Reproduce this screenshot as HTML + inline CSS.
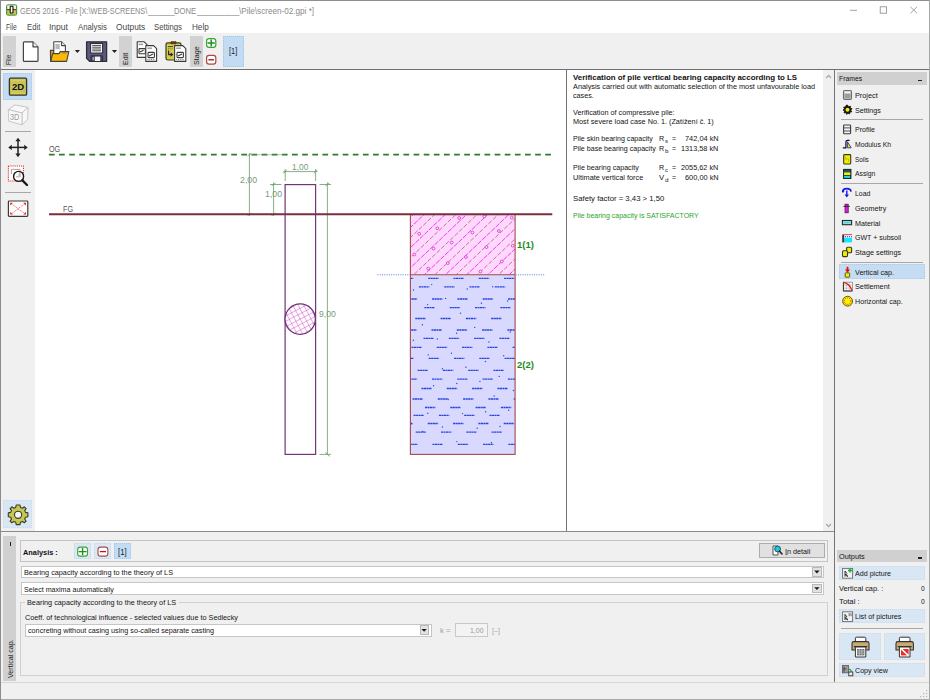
<!DOCTYPE html>
<html lang="en">
<head>
<meta charset="utf-8">
<title>GEO5 2016 - Pile</title>
<style>
html,body{margin:0;padding:0;}
body{width:930px;height:700px;overflow:hidden;background:#f0f0f0;position:relative;font-family:"Liberation Sans",sans-serif;}
.a{position:absolute;}
.t{position:absolute;white-space:pre;transform-origin:0 0;font-family:"Liberation Sans",sans-serif;}
.b{position:absolute;box-sizing:border-box;}
svg{position:absolute;left:0;top:0;overflow:visible;}
</style>
</head>
<body>
<!-- title + menu -->
<div class="a" style="left:0;top:0;width:930px;height:33.3px;background:#fff;"></div>
<div class="a" style="left:0;top:0;width:930px;height:1px;background:#8e8e8e;"></div>
<!-- toolbar -->
<div class="a" style="left:0;top:33.3px;width:930px;height:35.7px;background:#f0f0f0;"></div>
<div class="a" style="left:0;top:68.6px;width:930px;height:1.4px;background:#707070;"></div>
<!-- toolbar labels -->
<div class="a" style="left:3px;top:36px;width:12.5px;height:30.6px;background:#d2d2d2;"></div>
<div class="a" style="left:119.4px;top:36px;width:12.5px;height:30.6px;background:#d2d2d2;"></div>
<div class="a" style="left:190px;top:36px;width:12.8px;height:30.6px;background:#d2d2d2;"></div>
<div class="b" style="left:223px;top:36px;width:21px;height:30.6px;background:#c3dbf3;border:1px dotted #9cc4ec;"></div>

<!-- left toolbar -->
<div class="a" style="left:0;top:70px;width:35px;height:461px;background:#f0f0f0;"></div>
<!-- canvas -->
<div class="a" style="left:35px;top:70px;width:531px;height:461px;background:#fff;"></div>
<!-- splitter -->
<div class="a" style="left:565.8px;top:70px;width:1px;height:461px;background:#747474;"></div>
<!-- text panel -->
<div class="a" style="left:567px;top:70px;width:256px;height:461px;background:#fff;"></div>
<div class="a" style="left:823px;top:70px;width:11px;height:461px;background:#f0f0f0;"></div>
<div class="a" style="left:834px;top:70px;width:1px;height:612px;background:#747474;"></div>
<!-- right panel -->
<div class="a" style="left:835.2px;top:70px;width:95px;height:612px;background:#f0f0f0;"></div>
<div class="a" style="left:837.1px;top:72px;width:90.4px;height:12.8px;background:#d0d0d0;"></div>
<div class="a" style="left:918px;top:79.6px;width:4.2px;height:1.4px;background:#222;"></div>
<div class="a" style="left:841px;top:119.2px;width:82px;height:1px;background:#a8a8a8;"></div>
<div class="a" style="left:841px;top:182.7px;width:82px;height:1px;background:#a8a8a8;"></div>
<div class="a" style="left:841px;top:261.5px;width:82px;height:1px;background:#a8a8a8;"></div>
<div class="b" style="left:839.2px;top:264px;width:85.6px;height:14.7px;background:#c5dcf3;border:1px dotted #a9cbee;"></div>

<!-- horizontal divider -->
<div class="a" style="left:0;top:531px;width:834px;height:1.4px;background:#8a8a8a;"></div>
<!-- bottom panel -->
<div class="a" style="left:0;top:532.4px;width:834px;height:149px;background:#f0f0f0;"></div>
<div class="a" style="left:2.8px;top:536px;width:13px;height:144.5px;background:#d0d0d0;"></div>
<div class="a" style="left:10.3px;top:542px;width:1.2px;height:4px;background:#222;"></div>
<!-- analysis frame -->
<div class="b" style="left:20px;top:539.8px;width:807.5px;height:22px;border:1px solid #c4c4c4;"></div>
<div class="b" style="left:73.6px;top:543.4px;width:17.2px;height:15.6px;background:#dae7f4;border:1px dotted #bfd8f0;"></div>
<div class="b" style="left:94px;top:543.4px;width:17.2px;height:15.6px;background:#dae7f4;border:1px dotted #bfd8f0;"></div>
<div class="b" style="left:114px;top:543.4px;width:17.4px;height:15.6px;background:#c3dcf5;border:1px dotted #9ccaf5;"></div>
<div class="b" style="left:758.6px;top:543.3px;width:66.2px;height:14.8px;background:#e1e1e1;border:1px solid #adadad;"></div>
<!-- combos -->
<div class="b" style="left:21px;top:565.8px;width:803px;height:12.7px;background:#fff;border:1px solid #c6c6c6;"></div>
<div class="b" style="left:21px;top:582.2px;width:803px;height:13.2px;background:#fff;border:1px solid #c6c6c6;"></div>
<div class="b" style="left:812.3px;top:567.3px;width:9.4px;height:9.4px;background:#e2e2e2;border:1px solid #b8b8b8;"></div>
<div class="b" style="left:812.3px;top:584px;width:9.4px;height:9.4px;background:#e2e2e2;border:1px solid #b8b8b8;"></div>
<!-- group box -->
<div class="b" style="left:20.3px;top:602.4px;width:807.5px;height:73.6px;border:1px solid #d0d0d0;"></div>
<div class="a" style="left:24.5px;top:598px;width:154px;height:9px;background:#f0f0f0;"></div>
<div class="b" style="left:25.2px;top:623.6px;width:406.6px;height:13.2px;background:#fff;border:1px solid #c6c6c6;"></div>
<div class="b" style="left:419.6px;top:625.4px;width:9.4px;height:9.4px;background:#e2e2e2;border:1px solid #b8b8b8;"></div>
<div class="b" style="left:454.8px;top:623px;width:33.2px;height:14.4px;background:#f3f3f3;border:1px solid #c9c9c9;"></div>
<!-- outputs -->
<div class="a" style="left:837.1px;top:549.7px;width:90.4px;height:12.8px;background:#d0d0d0;"></div>
<div class="a" style="left:918px;top:557.4px;width:4.2px;height:1.4px;background:#222;"></div>
<div class="b" style="left:839.1px;top:565.8px;width:85.9px;height:13.8px;background:#d9e6f3;border:1px dotted #cbdcee;"></div>
<div class="b" style="left:839.1px;top:609.4px;width:85.9px;height:13.8px;background:#d9e6f3;border:1px dotted #cbdcee;"></div>
<div class="a" style="left:841px;top:628px;width:82px;height:1px;background:#a8a8a8;"></div>
<div class="b" style="left:839.1px;top:633px;width:41.5px;height:27.4px;background:#d9e6f3;border:1px dotted #cbdcee;"></div>
<div class="b" style="left:884.4px;top:633px;width:40.8px;height:27.4px;background:#d9e6f3;border:1px dotted #cbdcee;"></div>
<div class="b" style="left:839.1px;top:663px;width:85.9px;height:13.6px;background:#d9e6f3;border:1px dotted #cbdcee;"></div>
<!-- status bar -->
<div class="a" style="left:0;top:681.6px;width:930px;height:1.2px;background:#d6d6d6;"></div>
<div class="a" style="left:0;top:682.6px;width:930px;height:17px;background:#f0f0f0;"></div>
<div class="a" style="left:0;top:698.8px;width:930px;height:1.2px;background:#a8a8a8;"></div>
<div class="a" style="left:0;top:0;width:1px;height:700px;background:#8c8c8c;"></div>
<div class="a" style="left:929px;top:0;width:1px;height:700px;background:#a4a8a8;"></div>

<!-- left toolbar buttons -->
<div class="b" style="left:3px;top:72.6px;width:29.2px;height:27.2px;background:#c3dbf3;border:1px dotted #a4c9ee;"></div>
<div class="a" style="left:4.6px;top:131.3px;width:26px;height:1px;background:#a8a8a8;"></div>
<div class="a" style="left:4.6px;top:192px;width:26px;height:1px;background:#a8a8a8;"></div>
<div class="b" style="left:3px;top:500.4px;width:28.6px;height:27.4px;background:#d9e6f3;border:1px dotted #cbdcee;"></div>

<svg width="930" height="700" viewBox="0 0 930 700">
<defs>
<clipPath id="cs1"><rect x="410.4" y="214.5" width="104.6" height="60.3"/></clipPath>
<clipPath id="cs2"><rect x="410.4" y="274.8" width="104.6" height="179.5"/></clipPath>
<clipPath id="cc"><circle cx="300.2" cy="319.1" r="15.2"/></clipPath>
</defs>
<rect x="410.4" y="214.5" width="104.6" height="60.3" fill="#ffd9fd"/>
<g clip-path="url(#cs1)" stroke-width="0.85" fill="none">
<line x1="402.9" y1="214.5" x2="338.7" y2="275.5" stroke="#ee1cee" stroke-dasharray="5 1.2" stroke-dashoffset="0.0"/>
<line x1="413.5" y1="214.5" x2="349.3" y2="275.5" stroke="#c05a96" stroke-dasharray="4.4 1.8" stroke-dashoffset="2.3"/>
<line x1="424.1" y1="214.5" x2="359.9" y2="275.5" stroke="#ee1cee" stroke-dasharray="5 1.2" stroke-dashoffset="3.4"/>
<line x1="434.7" y1="214.5" x2="370.5" y2="275.5" stroke="#c05a96" stroke-dasharray="4.4 1.8" stroke-dashoffset="1.1"/>
<line x1="445.3" y1="214.5" x2="381.1" y2="275.5" stroke="#ee1cee" stroke-dasharray="5 1.2" stroke-dashoffset="1.0"/>
<line x1="455.9" y1="214.5" x2="391.7" y2="275.5" stroke="#c05a96" stroke-dasharray="4.4 1.8" stroke-dashoffset="5.7"/>
<line x1="466.5" y1="214.5" x2="402.3" y2="275.5" stroke="#ee1cee" stroke-dasharray="5 1.2" stroke-dashoffset="4.4"/>
<line x1="477.1" y1="214.5" x2="412.9" y2="275.5" stroke="#c05a96" stroke-dasharray="4.4 1.8" stroke-dashoffset="4.5"/>
<line x1="487.7" y1="214.5" x2="423.5" y2="275.5" stroke="#ee1cee" stroke-dasharray="5 1.2" stroke-dashoffset="2.0"/>
<line x1="498.3" y1="214.5" x2="434.1" y2="275.5" stroke="#c05a96" stroke-dasharray="4.4 1.8" stroke-dashoffset="3.3"/>
<line x1="508.9" y1="214.5" x2="444.7" y2="275.5" stroke="#ee1cee" stroke-dasharray="5 1.2" stroke-dashoffset="5.4"/>
<line x1="519.5" y1="214.5" x2="455.3" y2="275.5" stroke="#c05a96" stroke-dasharray="4.4 1.8" stroke-dashoffset="2.1"/>
<line x1="530.1" y1="214.5" x2="465.9" y2="275.5" stroke="#ee1cee" stroke-dasharray="5 1.2" stroke-dashoffset="3.0"/>
<line x1="540.7" y1="214.5" x2="476.5" y2="275.5" stroke="#c05a96" stroke-dasharray="4.4 1.8" stroke-dashoffset="0.9"/>
<line x1="551.3" y1="214.5" x2="487.1" y2="275.5" stroke="#ee1cee" stroke-dasharray="5 1.2" stroke-dashoffset="0.6"/>
<line x1="561.9" y1="214.5" x2="497.7" y2="275.5" stroke="#c05a96" stroke-dasharray="4.4 1.8" stroke-dashoffset="5.5"/>
<line x1="572.5" y1="214.5" x2="508.3" y2="275.5" stroke="#ee1cee" stroke-dasharray="5 1.2" stroke-dashoffset="4.0"/>
<line x1="583.1" y1="214.5" x2="518.9" y2="275.5" stroke="#c05a96" stroke-dasharray="4.4 1.8" stroke-dashoffset="4.3"/>
<circle cx="459.2" cy="218" r="1.4" stroke="#d428d4" stroke-width="0.8" fill="#ffe6fe"/>
<circle cx="484.4" cy="216.4" r="1.4" stroke="#d428d4" stroke-width="0.8" fill="#ffe6fe"/>
<circle cx="511.7" cy="217.7" r="1.4" stroke="#d428d4" stroke-width="0.8" fill="#ffe6fe"/>
<circle cx="437.3" cy="228.3" r="1.4" stroke="#d428d4" stroke-width="0.8" fill="#ffe6fe"/>
<circle cx="419.2" cy="233.8" r="1.4" stroke="#d428d4" stroke-width="0.8" fill="#ffe6fe"/>
<circle cx="472.4" cy="232.5" r="1.4" stroke="#d428d4" stroke-width="0.8" fill="#ffe6fe"/>
<circle cx="498.9" cy="231" r="1.4" stroke="#d428d4" stroke-width="0.8" fill="#ffe6fe"/>
<circle cx="451.7" cy="242.5" r="1.4" stroke="#d428d4" stroke-width="0.8" fill="#ffe6fe"/>
<circle cx="433.6" cy="248.6" r="1.4" stroke="#d428d4" stroke-width="0.8" fill="#ffe6fe"/>
<circle cx="486.5" cy="247.1" r="1.4" stroke="#d428d4" stroke-width="0.8" fill="#ffe6fe"/>
<circle cx="512.7" cy="245.7" r="1.4" stroke="#d428d4" stroke-width="0.8" fill="#ffe6fe"/>
<circle cx="414.3" cy="254.5" r="1.4" stroke="#d428d4" stroke-width="0.8" fill="#ffe6fe"/>
<circle cx="465.9" cy="257" r="1.4" stroke="#d428d4" stroke-width="0.8" fill="#ffe6fe"/>
<circle cx="447.8" cy="263.1" r="1.4" stroke="#d428d4" stroke-width="0.8" fill="#ffe6fe"/>
<circle cx="501.8" cy="261.5" r="1.4" stroke="#d428d4" stroke-width="0.8" fill="#ffe6fe"/>
<circle cx="428.2" cy="268.6" r="1.4" stroke="#d428d4" stroke-width="0.8" fill="#ffe6fe"/>
<circle cx="480.5" cy="271.5" r="1.4" stroke="#d428d4" stroke-width="0.8" fill="#ffe6fe"/>
</g>
<rect x="410.4" y="274.8" width="104.6" height="179.5" fill="#d9d9ff"/>
<g clip-path="url(#cs2)" stroke="#2444dc" stroke-width="1.3" stroke-dasharray="2.1 0.4">
<line x1="377.6" y1="278.4" x2="388.0" y2="278.4"/>
<line x1="402.9" y1="278.4" x2="413.3" y2="278.4"/>
<line x1="428.2" y1="278.4" x2="438.6" y2="278.4"/>
<line x1="453.5" y1="278.4" x2="463.9" y2="278.4"/>
<line x1="478.8" y1="278.4" x2="489.2" y2="278.4"/>
<line x1="504.1" y1="278.4" x2="514.5" y2="278.4"/>
<line x1="529.4" y1="278.4" x2="539.8" y2="278.4"/>
<line x1="368.3" y1="286.8" x2="378.7" y2="286.8"/>
<line x1="393.6" y1="286.8" x2="404.0" y2="286.8"/>
<line x1="418.9" y1="286.8" x2="429.3" y2="286.8"/>
<line x1="444.2" y1="286.8" x2="454.6" y2="286.8"/>
<line x1="469.5" y1="286.8" x2="479.9" y2="286.8"/>
<line x1="494.8" y1="286.8" x2="505.2" y2="286.8"/>
<line x1="520.1" y1="286.8" x2="530.5" y2="286.8"/>
<line x1="381.5" y1="299" x2="391.9" y2="299"/>
<line x1="406.8" y1="299" x2="417.2" y2="299"/>
<line x1="432.1" y1="299" x2="442.5" y2="299"/>
<line x1="457.4" y1="299" x2="467.8" y2="299"/>
<line x1="482.7" y1="299" x2="493.1" y2="299"/>
<line x1="508.0" y1="299" x2="518.4" y2="299"/>
<line x1="533.3" y1="299" x2="543.7" y2="299"/>
<line x1="373.8" y1="307.7" x2="384.2" y2="307.7"/>
<line x1="399.1" y1="307.7" x2="409.5" y2="307.7"/>
<line x1="424.4" y1="307.7" x2="434.8" y2="307.7"/>
<line x1="449.7" y1="307.7" x2="460.1" y2="307.7"/>
<line x1="475.0" y1="307.7" x2="485.4" y2="307.7"/>
<line x1="500.3" y1="307.7" x2="510.7" y2="307.7"/>
<line x1="525.6" y1="307.7" x2="536.0" y2="307.7"/>
<line x1="364.7" y1="318.5" x2="375.1" y2="318.5"/>
<line x1="390.0" y1="318.5" x2="400.4" y2="318.5"/>
<line x1="415.3" y1="318.5" x2="425.7" y2="318.5"/>
<line x1="440.6" y1="318.5" x2="451.0" y2="318.5"/>
<line x1="465.9" y1="318.5" x2="476.3" y2="318.5"/>
<line x1="491.2" y1="318.5" x2="501.6" y2="318.5"/>
<line x1="516.5" y1="318.5" x2="526.9" y2="318.5"/>
<line x1="380.9" y1="330" x2="391.3" y2="330"/>
<line x1="406.2" y1="330" x2="416.6" y2="330"/>
<line x1="431.5" y1="330" x2="441.9" y2="330"/>
<line x1="456.8" y1="330" x2="467.2" y2="330"/>
<line x1="482.1" y1="330" x2="492.5" y2="330"/>
<line x1="507.4" y1="330" x2="517.8" y2="330"/>
<line x1="532.7" y1="330" x2="543.1" y2="330"/>
<line x1="372.9" y1="338.4" x2="383.3" y2="338.4"/>
<line x1="398.2" y1="338.4" x2="408.6" y2="338.4"/>
<line x1="423.5" y1="338.4" x2="433.9" y2="338.4"/>
<line x1="448.8" y1="338.4" x2="459.2" y2="338.4"/>
<line x1="474.1" y1="338.4" x2="484.5" y2="338.4"/>
<line x1="499.4" y1="338.4" x2="509.8" y2="338.4"/>
<line x1="524.7" y1="338.4" x2="535.1" y2="338.4"/>
<line x1="360.9" y1="347.4" x2="371.3" y2="347.4"/>
<line x1="386.2" y1="347.4" x2="396.6" y2="347.4"/>
<line x1="411.5" y1="347.4" x2="421.9" y2="347.4"/>
<line x1="436.8" y1="347.4" x2="447.2" y2="347.4"/>
<line x1="462.1" y1="347.4" x2="472.5" y2="347.4"/>
<line x1="487.4" y1="347.4" x2="497.8" y2="347.4"/>
<line x1="512.7" y1="347.4" x2="523.1" y2="347.4"/>
<line x1="378.1" y1="358.4" x2="388.5" y2="358.4"/>
<line x1="403.4" y1="358.4" x2="413.8" y2="358.4"/>
<line x1="428.7" y1="358.4" x2="439.1" y2="358.4"/>
<line x1="454.0" y1="358.4" x2="464.4" y2="358.4"/>
<line x1="479.3" y1="358.4" x2="489.7" y2="358.4"/>
<line x1="504.6" y1="358.4" x2="515.0" y2="358.4"/>
<line x1="529.9" y1="358.4" x2="540.3" y2="358.4"/>
<line x1="367.0" y1="370.4" x2="377.4" y2="370.4"/>
<line x1="392.3" y1="370.4" x2="402.7" y2="370.4"/>
<line x1="417.6" y1="370.4" x2="428.0" y2="370.4"/>
<line x1="442.9" y1="370.4" x2="453.3" y2="370.4"/>
<line x1="468.2" y1="370.4" x2="478.6" y2="370.4"/>
<line x1="493.5" y1="370.4" x2="503.9" y2="370.4"/>
<line x1="518.8" y1="370.4" x2="529.2" y2="370.4"/>
<line x1="381.4" y1="379.2" x2="391.8" y2="379.2"/>
<line x1="406.7" y1="379.2" x2="417.1" y2="379.2"/>
<line x1="432.0" y1="379.2" x2="442.4" y2="379.2"/>
<line x1="457.3" y1="379.2" x2="467.7" y2="379.2"/>
<line x1="482.6" y1="379.2" x2="493.0" y2="379.2"/>
<line x1="507.9" y1="379.2" x2="518.3" y2="379.2"/>
<line x1="533.2" y1="379.2" x2="543.6" y2="379.2"/>
<line x1="370.9" y1="388.5" x2="381.3" y2="388.5"/>
<line x1="396.2" y1="388.5" x2="406.6" y2="388.5"/>
<line x1="421.5" y1="388.5" x2="431.9" y2="388.5"/>
<line x1="446.8" y1="388.5" x2="457.2" y2="388.5"/>
<line x1="472.1" y1="388.5" x2="482.5" y2="388.5"/>
<line x1="497.4" y1="388.5" x2="507.8" y2="388.5"/>
<line x1="522.7" y1="388.5" x2="533.1" y2="388.5"/>
<line x1="361.9" y1="399" x2="372.3" y2="399"/>
<line x1="387.2" y1="399" x2="397.6" y2="399"/>
<line x1="412.5" y1="399" x2="422.9" y2="399"/>
<line x1="437.8" y1="399" x2="448.2" y2="399"/>
<line x1="463.1" y1="399" x2="473.5" y2="399"/>
<line x1="488.4" y1="399" x2="498.8" y2="399"/>
<line x1="513.7" y1="399" x2="524.1" y2="399"/>
<line x1="374.4" y1="407.5" x2="384.8" y2="407.5"/>
<line x1="399.7" y1="407.5" x2="410.1" y2="407.5"/>
<line x1="425.0" y1="407.5" x2="435.4" y2="407.5"/>
<line x1="450.3" y1="407.5" x2="460.7" y2="407.5"/>
<line x1="475.6" y1="407.5" x2="486.0" y2="407.5"/>
<line x1="500.9" y1="407.5" x2="511.3" y2="407.5"/>
<line x1="526.2" y1="407.5" x2="536.6" y2="407.5"/>
<line x1="363.0" y1="415.3" x2="373.4" y2="415.3"/>
<line x1="388.3" y1="415.3" x2="398.7" y2="415.3"/>
<line x1="413.6" y1="415.3" x2="424.0" y2="415.3"/>
<line x1="438.9" y1="415.3" x2="449.3" y2="415.3"/>
<line x1="464.2" y1="415.3" x2="474.6" y2="415.3"/>
<line x1="489.5" y1="415.3" x2="499.9" y2="415.3"/>
<line x1="514.8" y1="415.3" x2="525.2" y2="415.3"/>
<line x1="377.2" y1="423.5" x2="387.6" y2="423.5"/>
<line x1="402.5" y1="423.5" x2="412.9" y2="423.5"/>
<line x1="427.8" y1="423.5" x2="438.2" y2="423.5"/>
<line x1="453.1" y1="423.5" x2="463.5" y2="423.5"/>
<line x1="478.4" y1="423.5" x2="488.8" y2="423.5"/>
<line x1="503.7" y1="423.5" x2="514.1" y2="423.5"/>
<line x1="529.0" y1="423.5" x2="539.4" y2="423.5"/>
<line x1="365.1" y1="432.1" x2="375.5" y2="432.1"/>
<line x1="390.4" y1="432.1" x2="400.8" y2="432.1"/>
<line x1="415.7" y1="432.1" x2="426.1" y2="432.1"/>
<line x1="441.0" y1="432.1" x2="451.4" y2="432.1"/>
<line x1="466.3" y1="432.1" x2="476.7" y2="432.1"/>
<line x1="491.6" y1="432.1" x2="502.0" y2="432.1"/>
<line x1="516.9" y1="432.1" x2="527.3" y2="432.1"/>
<line x1="381.9" y1="444.4" x2="392.3" y2="444.4"/>
<line x1="407.2" y1="444.4" x2="417.6" y2="444.4"/>
<line x1="432.5" y1="444.4" x2="442.9" y2="444.4"/>
<line x1="457.8" y1="444.4" x2="468.2" y2="444.4"/>
<line x1="483.1" y1="444.4" x2="493.5" y2="444.4"/>
<line x1="508.4" y1="444.4" x2="518.8" y2="444.4"/>
<line x1="533.7" y1="444.4" x2="544.1" y2="444.4"/>
</g>
<g fill="#2a48d8">
<circle cx="431.7" cy="284.6" r="0.7"/>
<circle cx="413.4" cy="290" r="0.7"/>
<circle cx="467.2" cy="289" r="0.7"/>
<circle cx="492.7" cy="286.8" r="0.7"/>
<circle cx="445.6" cy="298.4" r="0.7"/>
<circle cx="427.6" cy="304.6" r="0.7"/>
<circle cx="481.4" cy="303.3" r="0.7"/>
<circle cx="507.6" cy="301" r="0.7"/>
<circle cx="460.5" cy="313.2" r="0.7"/>
<circle cx="422.4" cy="324.8" r="0.7"/>
<circle cx="474.7" cy="327.4" r="0.7"/>
<circle cx="456.6" cy="333.2" r="0.7"/>
<circle cx="510.2" cy="332" r="0.7"/>
<circle cx="437.3" cy="339" r="0.7"/>
<circle cx="413.4" cy="340.3" r="0.7"/>
<circle cx="488.9" cy="342" r="0.7"/>
<circle cx="513.4" cy="347.4" r="0.7"/>
<circle cx="451.5" cy="353.2" r="0.7"/>
<circle cx="428.2" cy="354.9" r="0.7"/>
<circle cx="503.7" cy="355.8" r="0.7"/>
<circle cx="485.4" cy="361.5" r="0.7"/>
<circle cx="442.4" cy="368.8" r="0.7"/>
<circle cx="465.9" cy="367.3" r="0.7"/>
<circle cx="499.2" cy="376.4" r="0.7"/>
<circle cx="479.9" cy="381.4" r="0.7"/>
<circle cx="456.8" cy="383.5" r="0.7"/>
<circle cx="433.6" cy="385.8" r="0.7"/>
<circle cx="513.4" cy="390.5" r="0.7"/>
<circle cx="448.2" cy="399.5" r="0.7"/>
<circle cx="494.2" cy="396" r="0.7"/>
<circle cx="427.8" cy="413.3" r="0.7"/>
<circle cx="462.6" cy="413.6" r="0.7"/>
<circle cx="485.6" cy="411.7" r="0.7"/>
<circle cx="508.7" cy="410.2" r="0.7"/>
<circle cx="442.4" cy="427" r="0.7"/>
<circle cx="477.2" cy="428.2" r="0.7"/>
<circle cx="500" cy="426.5" r="0.7"/>
<circle cx="411.3" cy="423.8" r="0.7"/>
<circle cx="456.8" cy="441.6" r="0.7"/>
<circle cx="491.4" cy="442.7" r="0.7"/>
<circle cx="422.7" cy="431.4" r="0.7"/>
</g>
<rect x="410.4" y="214.5" width="104.7" height="239.9" fill="none" stroke="#a34a4a" stroke-width="1.1"/>
<line x1="410.4" y1="274.8" x2="515.1" y2="274.8" stroke="#a34a4a" stroke-width="1.1"/>
<line x1="377.4" y1="274.8" x2="410" y2="274.8" stroke="#4f86dc" stroke-width="1" stroke-dasharray="1 1.3"/>
<line x1="515.6" y1="274.8" x2="544.6" y2="274.8" stroke="#4f86dc" stroke-width="1" stroke-dasharray="1 1.3"/>
<line x1="48.9" y1="154.7" x2="552.3" y2="154.7" stroke="#2f7a2f" stroke-width="1.7" stroke-dasharray="5.7 4.43"/>
<g stroke="#679a67" stroke-width="0.8" fill="none">
<line x1="249.4" y1="153" x2="249.4" y2="216"/>
<line x1="247.6" y1="156" x2="251.2" y2="153.3"/><line x1="247.6" y1="215.6" x2="251.2" y2="213"/>
<line x1="249.4" y1="154.7" x2="285" y2="154.7" stroke-width="0.5"/>
<line x1="273.6" y1="182.5" x2="273.6" y2="216"/>
<line x1="271.6" y1="185.8" x2="275.6" y2="183"/><line x1="271.6" y1="215.6" x2="275.6" y2="213"/>
<line x1="270" y1="184.5" x2="281.5" y2="184.5"/>
<line x1="283.2" y1="171.6" x2="317.5" y2="171.6"/>
<line x1="285.2" y1="169" x2="285.2" y2="181"/><line x1="315.6" y1="169" x2="315.6" y2="181"/>
<line x1="283.6" y1="173.4" x2="286.8" y2="169.8"/><line x1="314" y1="173.4" x2="317.2" y2="169.8"/>
<line x1="327.4" y1="182.5" x2="327.4" y2="455"/>
<line x1="319.5" y1="184.5" x2="331" y2="184.5"/><line x1="319.5" y1="454.4" x2="331" y2="454.4"/>
<line x1="325.4" y1="185.8" x2="329.4" y2="183"/><line x1="325.2" y1="452.4" x2="329.8" y2="456.4"/>
</g>
<line x1="49" y1="214.3" x2="552.3" y2="214.3" stroke="#7a2f3c" stroke-width="1.9"/>
<rect x="285.1" y="184.6" width="30.5" height="269.8" fill="none" stroke="#74337a" stroke-width="1.2"/>
<circle cx="300.2" cy="319.1" r="15.2" fill="#fff"/>
<g clip-path="url(#cc)" stroke="#d456c8" stroke-width="0.55">
<line x1="312.0" y1="290.2" x2="330.8" y2="325.5"/>
<line x1="307.8" y1="292.4" x2="326.5" y2="327.7"/>
<line x1="303.5" y1="294.7" x2="322.3" y2="330.0"/>
<line x1="299.3" y1="296.9" x2="318.1" y2="332.3"/>
<line x1="295.0" y1="299.2" x2="313.8" y2="334.5"/>
<line x1="290.8" y1="301.4" x2="309.6" y2="336.8"/>
<line x1="286.6" y1="303.7" x2="305.4" y2="339.0"/>
<line x1="282.3" y1="305.9" x2="301.1" y2="341.3"/>
<line x1="278.1" y1="308.2" x2="296.9" y2="343.5"/>
<line x1="273.9" y1="310.5" x2="292.6" y2="345.8"/>
<line x1="269.6" y1="312.7" x2="288.4" y2="348.0"/>
<line x1="271.3" y1="307.3" x2="306.6" y2="288.5"/>
<line x1="273.5" y1="311.5" x2="308.8" y2="292.8"/>
<line x1="275.8" y1="315.8" x2="311.1" y2="297.0"/>
<line x1="278.0" y1="320.0" x2="313.4" y2="301.2"/>
<line x1="280.3" y1="324.3" x2="315.6" y2="305.5"/>
<line x1="282.5" y1="328.5" x2="317.9" y2="309.7"/>
<line x1="284.8" y1="332.7" x2="320.1" y2="313.9"/>
<line x1="287.0" y1="337.0" x2="322.4" y2="318.2"/>
<line x1="289.3" y1="341.2" x2="324.6" y2="322.4"/>
<line x1="291.6" y1="345.4" x2="326.9" y2="326.7"/>
<line x1="293.8" y1="349.7" x2="329.1" y2="330.9"/>
</g>
<circle cx="300.2" cy="319.1" r="15.2" fill="none" stroke="#6f2f74" stroke-width="1.3"/>
</svg>
<svg width="930" height="700" viewBox="0 0 930 700">
<!-- app icon -->
<g>
<rect x="6" y="4.2" width="11.2" height="11.6" rx="2.4" fill="#4e9a3a"/>
<rect x="7.2" y="5.4" width="8.8" height="3.6" fill="#f2f2ea"/>
<rect x="7.2" y="9" width="8.8" height="1.2" fill="#5a4a10"/>
<rect x="7.2" y="10.2" width="8.8" height="4.4" fill="#c9c056"/>
<rect x="10.2" y="6.2" width="2.8" height="6.8" rx="0.8" fill="#fff" stroke="#111" stroke-width="1.1"/>
</g>
<!-- window controls -->
<g stroke="#8a8a8a" stroke-width="0.8" fill="none">
<line x1="850" y1="10.3" x2="857" y2="10.3"/>
<rect x="880.2" y="6.8" width="6.4" height="6.4"/>
<line x1="910.4" y1="6.8" x2="917" y2="13.4"/><line x1="917" y1="6.8" x2="910.4" y2="13.4"/>
</g>
<!-- new doc -->
<g fill="#fff" stroke="#444" stroke-width="1.2" stroke-linejoin="round">
<path d="M24.4 41.8 H33 L38 46.8 V60.4 Q38 61.4 37 61.4 H24.4 Q23.4 61.4 23.4 60.4 V42.8 Q23.4 41.8 24.4 41.8 Z"/>
<path d="M33 41.8 V46.8 H38" fill="#eee"/>
</g>
<!-- open -->
<g stroke="#444" stroke-width="1.1" stroke-linejoin="round">
<path d="M50.4 50.4 H54 V61.4 H50.6 Z" fill="#e0a000"/>
<path d="M53.8 41.8 H61.6 L65.4 45.6 V55 H53.8 Z" fill="#fff"/>
<path d="M61.6 41.8 V45.6 H65.4" fill="#eee"/>
<path d="M55.4 44 H59.8 V49.2 H55.4 Z" fill="#b8b8b8" stroke="none"/>
<path d="M50.8 61.4 L52.6 53.6 H59 L60.2 51.6 H68.8 L66.6 61.4 Z" fill="#fdb900"/>
<path d="M62.2 53 H66.4" stroke="#777" stroke-width="0.9"/>
</g>
<path d="M74.8 50.1 H80 L77.4 52.9 Z" fill="#222"/>
<path d="M111.9 50.1 H117.1 L114.5 52.9 Z" fill="#222"/>
<!-- save -->
<g stroke-linejoin="round">
<path d="M86.6 41.8 H106.6 V61.4 H89.6 L86.6 58.4 Z" fill="#5a5a80" stroke="#2e2e38" stroke-width="1.3"/>
<rect x="90.6" y="43.4" width="12" height="9.6" fill="#fff" stroke="#2e2e38" stroke-width="1.1"/>
<g stroke="#333" stroke-width="0.9"><line x1="92.2" y1="45.4" x2="101" y2="45.4"/><line x1="92.2" y1="47.2" x2="101" y2="47.2"/><line x1="92.2" y1="49" x2="101" y2="49"/><line x1="92.2" y1="50.8" x2="101" y2="50.8"/></g>
<rect x="91" y="55.8" width="11.6" height="5.6" fill="#44445c" stroke="#2e2e38" stroke-width="1"/>
<rect x="94.8" y="56.6" width="5.4" height="4.4" fill="#f4f4f4"/>
<rect x="92.4" y="57.2" width="1.6" height="3" fill="#9a9ab0"/>
</g>
<!-- copy -->
<g stroke="#3a3a3a" stroke-width="1.1" stroke-linejoin="round" fill="#fff">
<path d="M137.2 41.8 H144.2 L147 44.6 V57.4 H137.2 Z"/>
<path d="M138.6 44.4 H143" stroke="#999" stroke-width="1.4"/>
<rect x="139" y="48.6" width="6.4" height="5.2" rx="0.8"/>
<path d="M140 52 L143.6 50.2" />
<path d="M145.8 45.6 H153.6 L156.6 48.6 V61.4 H145.8 Z"/>
<path d="M147.4 48.2 H152" stroke="#999" stroke-width="1.4"/>
<rect x="148" y="52.4" width="6.4" height="5.2" rx="0.8"/>
<path d="M149 56 L153 54"/>
<path d="M147.4 59.6 H155" stroke-width="0.7" stroke-dasharray="1 0.8"/>
</g>
<!-- paste -->
<g stroke-linejoin="round">
<rect x="166" y="42.8" width="15" height="17.2" rx="1.8" fill="#d2cb4e" stroke="#3a3a20" stroke-width="1.2"/>
<rect x="171" y="41.6" width="5" height="2.2" fill="#7a3a10" stroke="#3a2a10" stroke-width="0.6"/>
<path d="M168 46.6 H173" stroke="#333" stroke-width="0.9" fill="none"/>
<path d="M168 48.8 H173" stroke="#555" stroke-width="0.8" stroke-dasharray="1 0.8" fill="none"/>
<path d="M168.6 50.6 V54.6 H171" stroke="#222" stroke-width="1.1" fill="none"/>
<path d="M170.6 52.4 L173.4 54.6 L170.6 56.8 Z" fill="#222"/>
<path d="M174.6 45.6 H182.8 L185.8 48.6 V61.4 H174.6 Z" fill="#fff" stroke="#3a3a3a" stroke-width="1.1"/>
<path d="M176.2 48.2 H181" stroke="#999" stroke-width="1.4" fill="none"/>
<rect x="177" y="52.4" width="6.4" height="5.2" rx="0.8" fill="#fff" stroke="#3a3a3a" stroke-width="1.1"/>
<path d="M178 56 L182 54" stroke="#3a3a3a" stroke-width="1.1" fill="none"/>
<path d="M176.2 59.6 H184" stroke="#3a3a3a" stroke-width="0.7" stroke-dasharray="1 0.8" fill="none"/>
</g>
<!-- stage plus/minus -->
<g fill="#fff" stroke-width="1.2">
<rect x="206.6" y="38.6" width="9.2" height="8.8" rx="2.4" stroke="#35a535"/>
<path d="M207.6 43 H214.8 M211.2 39.6 V46.4" stroke="#1f8f1f" stroke-width="1.5" fill="none"/>
<rect x="206.6" y="55.4" width="9.2" height="8.8" rx="2.4" stroke="#a84848"/>
<path d="M208.4 59.8 H214" stroke="#b01c1c" stroke-width="1.4" fill="none"/>
</g>
<!-- 2D -->
<g>
<rect x="9.4" y="78.2" width="17.2" height="17" rx="1.2" fill="#c9c45a" stroke="#333" stroke-width="1.3"/>
<path d="M11 80.2 H25 M11 93.4 H25" stroke="#f3e23a" stroke-width="0.9" stroke-dasharray="1.4 0.8" fill="none"/>
</g>
<!-- 3D cube -->
<g fill="#f8f8f8" stroke="#c2c2c2" stroke-width="0.9" stroke-linejoin="round">
<path d="M8.3 109.6 L15 104.9 L28 107.4 L22 113 Z"/>
<path d="M22 113 L28 107.4 L27.7 119.2 L22 124.8 Z"/>
<path d="M8.3 109.6 L22 113 L22 124.8 L8.7 121.2 Z"/>
</g>
<!-- move -->
<g stroke="#222" stroke-width="1.5" fill="#222">
<line x1="11" y1="147.4" x2="25" y2="147.4"/><line x1="18" y1="140.6" x2="18" y2="154.4"/>
<path d="M8.2 147.4 L11.8 144.8 V150 Z M27.8 147.4 L24.2 144.8 V150 Z M18 137.7 L15.4 141.3 H20.6 Z M18 157.2 L15.4 153.6 H20.6 Z" stroke="none"/>
</g>
<!-- zoom window -->
<g>
<rect x="8.4" y="166" width="15" height="15" fill="#fff" stroke="#f02020" stroke-width="1.1" stroke-dasharray="1.1 1"/>
<path d="M11.4 169.4 H20 V177.2" fill="none" stroke="#9a9a9a" stroke-width="0.9"/>
<path d="M11.4 169.4 V174" fill="none" stroke="#9a9a9a" stroke-width="0.9"/>
<circle cx="18.6" cy="176.4" r="5" fill="none" stroke="#1a1a1a" stroke-width="1.4"/>
<path d="M16 176.8 H19 V173.8" fill="none" stroke="#9a9a9a" stroke-width="0.8"/>
<line x1="22.4" y1="180.4" x2="27" y2="185" stroke="#1a1a1a" stroke-width="2.4" stroke-linecap="round"/>
</g>
<!-- extents -->
<g>
<rect x="8.4" y="201" width="19.4" height="15.4" rx="0.8" fill="#fff" stroke="#3a3a3a" stroke-width="1.2"/>
<path d="M11 203.4 L25.2 214 M25.2 203.4 L11 214" stroke="#f05050" stroke-width="0.9" stroke-dasharray="1.3 0.9" fill="none"/>
<path d="M10.2 202.8 H13 L10.2 205.4 Z M26 202.8 H23.2 L26 205.4 Z M10.2 214.6 H13 L10.2 212 Z M26 214.6 H23.2 L26 212 Z" fill="#f02020"/>
</g>
<!-- gear bottom-left -->
<g transform="translate(18.1 514.8)">
<g fill="#c8c850" stroke="#3a3a30" stroke-width="1.1" stroke-linejoin="round">
<path id="gearp" d="M-1.9 -9.8 H1.9 L2.4 -7.4 L4.2 -6.6 L6.2 -8 L8 -6.2 L6.6 -4.2 L7.4 -2.4 L9.8 -1.9 V1.9 L7.4 2.4 L6.6 4.2 L8 6.2 L6.2 8 L4.2 6.6 L2.4 7.4 L1.9 9.8 H-1.9 L-2.4 7.4 L-4.2 6.6 L-6.2 8 L-8 6.2 L-6.6 4.2 L-7.4 2.4 L-9.8 1.9 V-1.9 L-7.4 -2.4 L-6.6 -4.2 L-8 -6.2 L-6.2 -8 L-4.2 -6.6 L-2.4 -7.4 Z"/>
<circle r="3.6" fill="#f4f6fb"/>
</g>
</g>

<!-- Frames icons -->
<!-- project -->
<g>
<rect x="843.5" y="90.5" width="8" height="9" rx="1.2" fill="#c9c9cc" stroke="#6a6a72" stroke-width="1.1"/>
<rect x="844.6" y="91.6" width="5.8" height="1.6" fill="#f4f4f4"/>
<rect x="844.6" y="93.8" width="5.8" height="4.6" fill="#9c9ca4"/>
</g>
<!-- settings gear -->
<g transform="translate(847.5 109.8)">
<path d="M0 -4.7 L1 -3 L2.9 -3.7 L2.7 -1.8 L4.6 -1.1 L3.2 0.3 L4.3 2 L2.4 2.3 L2.2 4.2 L0.5 3.3 L-0.9 4.6 L-1.5 2.8 L-3.5 3.1 L-2.8 1.3 L-4.5 0.3 L-3 -0.9 L-3.8 -2.7 L-1.9 -2.7 L-1.4 -4.5 Z" fill="#111" stroke="#111" stroke-width="0.8" stroke-linejoin="round"/>
<circle r="2" fill="#f4f000"/>
</g>
<!-- profile -->
<g>
<rect x="843.6" y="125" width="7" height="8.8" rx="0.8" fill="#f4f4f4" stroke="#3c3c40" stroke-width="1.1"/>
<path d="M843.6 127.9 H850.6 M843.6 131 H850.6" stroke="#3c3c40" stroke-width="0.9"/>
</g>
<!-- modulus -->
<g fill="none">
<path d="M842.8 147.8 H845.9 V142 Q845.9 140.4 847.5 140.4 H849.6" stroke="#111" stroke-width="1.2"/>
<path d="M847.4 141.8 L851.2 147.8 H847.4 Z" fill="#f0e000" stroke="#2030c0" stroke-width="0.9" stroke-linejoin="round"/>
</g>
<!-- soils -->
<g>
<rect x="843.7" y="154.6" width="7" height="9.4" rx="0.8" fill="#f2f000" stroke="#3a3a20" stroke-width="1.1"/>
<path d="M845.6 156.6 V159 H848.6 V162" stroke="#b8b000" stroke-width="0.8" fill="none"/>
</g>
<!-- assign -->
<g>
<rect x="843.6" y="169.4" width="7.2" height="9" fill="#20e0e0" stroke="#222" stroke-width="0.9"/>
<rect x="843.6" y="169.4" width="7.2" height="3.2" fill="#1f5a5a"/>
<rect x="843.6" y="172.6" width="7.2" height="2.6" fill="#f4f000"/>
<rect x="843.6" y="175.2" width="7.2" height="0.8" fill="#222"/>
<rect x="843.6" y="169.4" width="7.2" height="9" fill="none" stroke="#222" stroke-width="0.9"/>
</g>
<!-- load -->
<g fill="none" stroke="#1414f0">
<path d="M842.6 192 Q842.8 188.6 846.8 188.6 Q850.8 188.6 851 191.6" stroke-width="1.6"/>
<path d="M841.9 190.6 L842.6 193 L844.6 191.6 Z" fill="#1414f0" stroke="none"/>
<line x1="846.8" y1="190.4" x2="846.8" y2="195.6" stroke-width="1.4"/>
<path d="M844.6 194.4 H849 L846.8 197.6 Z" fill="#1414f0" stroke="none"/>
</g>
<!-- geometry -->
<g>
<rect x="845" y="204.2" width="3.2" height="8.6" fill="#e618e6" stroke="#3a103a" stroke-width="0.7"/>
<line x1="843.4" y1="206.4" x2="849.8" y2="206.4" stroke="#222" stroke-width="0.9"/>
</g>
<!-- material -->
<g>
<rect x="842.4" y="220.5" width="9.2" height="4.2" fill="#8fe8e8" stroke="#2a2a2a" stroke-width="1.1"/>
<path d="M843.6 222.6 H850.6" stroke="#20c8d8" stroke-width="1.2" stroke-dasharray="1 0.7"/>
</g>
<!-- gwt -->
<g>
<rect x="842.2" y="234.4" width="2.2" height="8" fill="#3a3a3a"/>
<rect x="844.4" y="237.8" width="7.6" height="4.6" fill="#10e8ff"/>
<rect x="844.4" y="235" width="7.6" height="2.8" fill="#e8f0ff"/>
<path d="M844.4 234.6 H852" stroke="#c02020" stroke-width="0.8"/>
<path d="M845 236.8 H852" stroke="#1030e0" stroke-width="1.1" stroke-dasharray="1.1 0.9"/>
</g>
<!-- stage settings -->
<g fill="#f0ea10" stroke="#3a3a10" stroke-width="1.1" stroke-linejoin="round">
<rect x="846.6" y="247.2" width="5" height="5.6" rx="1"/>
<rect x="842.5" y="250.8" width="5" height="5.8" rx="1"/>
</g>
<!-- vertical cap -->
<g>
<rect x="845.2" y="272.8" width="4.4" height="4.4" rx="0.6" fill="#f4ee00" stroke="#3a3a10" stroke-width="0.8"/>
<rect x="846.6" y="266.8" width="1.8" height="4" fill="#e01010"/>
<path d="M845 269.6 H850 L847.5 272.8 Z" fill="#e01010"/>
</g>
<!-- settlement -->
<g>
<rect x="843.4" y="282.2" width="9" height="8.8" fill="#f6f6f6" stroke="#8a8a8a" stroke-width="0.8"/>
<path d="M846.4 282.2 V291 M849.4 282.2 V291 M843.4 285.2 H852.4 M843.4 288.2 H852.4" stroke="#b0b0b0" stroke-width="0.6"/>
<path d="M843.4 291 H852.4 M843.4 282.2 V291" stroke="#333" stroke-width="1"/>
<path d="M843.4 282.4 Q849.6 283.4 852 290.6" fill="none" stroke="#f01010" stroke-width="1.3"/>
</g>
<!-- horizontal cap -->
<g>
<circle cx="847.6" cy="301.2" r="4.9" fill="#f8f400" stroke="#5a5a10" stroke-width="1"/>
<circle cx="847.6" cy="301.2" r="3.3" fill="none" stroke="#f02020" stroke-width="1" stroke-dasharray="1 1.1"/>
</g>

<!-- combos arrows -->
<g fill="#1a1a1a">
<path d="M814.2 570.6 H819.6 L816.9 573.4 Z"/>
<path d="M814.2 587.2 H819.6 L816.9 590 Z"/>
<path d="M421.4 629 H426.8 L424.1 631.8 Z"/>
</g>
<!-- analysis plus/minus -->
<g fill="#fff" stroke-width="1.1">
<rect x="77.7" y="547.1" width="9.8" height="9" rx="2.4" stroke="#35a535"/>
<path d="M78.6 551.6 H86.6 M82.6 548 V555.2" stroke="#1f8f1f" stroke-width="1.4" fill="none"/>
<rect x="98" y="547.1" width="9.8" height="9" rx="2.4" stroke="#a84848"/>
<path d="M99.8 551.6 H106" stroke="#b01c1c" stroke-width="1.3" fill="none"/>
</g>
<!-- in detail icon -->
<g>
<path d="M773 546 H778 V555 H773 Z" fill="#fff" stroke="#444" stroke-width="0.9"/>
<circle cx="777.6" cy="549" r="2.9" fill="#20c8d8" stroke="#1a5a6a" stroke-width="1"/>
<line x1="779.6" y1="551.2" x2="782" y2="554" stroke="#222" stroke-width="1.6" stroke-linecap="round"/>
<line x1="785.4" y1="554.6" x2="787.6" y2="554.6" stroke="#333" stroke-width="0.7"/>
</g>
<!-- outputs icons -->
<g>
<rect x="842.6" y="568.4" width="10" height="9.8" fill="#f2f2f2" stroke="#6a6a6a" stroke-width="0.9"/>
<path d="M845 576.6 V571 L847 573.6 M845 574.4 Q847.4 574 847.6 576.6 Z" fill="none" stroke="#222" stroke-width="0.9"/>
<path d="M848 570.6 H852 M850 568.6 V572.6" stroke="#10b030" stroke-width="1.5"/>
<rect x="842.6" y="611.8" width="10" height="9.8" fill="#f2f2f2" stroke="#6a6a6a" stroke-width="0.9"/>
<path d="M845 620 V614.4 L847 617 M845 617.8 Q847.4 617.4 847.6 620 Z" fill="none" stroke="#222" stroke-width="0.9"/>
<path d="M849.2 613.2 V616.2 M851 613.2 V616.2" stroke="#444" stroke-width="0.8"/>
</g>
<!-- printers -->
<g stroke-linejoin="round">
<path d="M855.4 641.6 V638.2 Q855.4 637.2 856.4 637.2 H864.8 Q865.8 637.2 865.8 638.2 V641.6 Z" fill="#fff" stroke="#333" stroke-width="1"/>
<path d="M852 650 V643.4 Q852 641.6 853.8 641.6 H867.2 Q869 641.6 869 643.4 V650 Z" fill="#c9aa72" stroke="#333" stroke-width="1.1"/>
<rect x="853.8" y="646" width="13.4" height="1.2" fill="#333"/>
<rect x="855.4" y="647" width="10.4" height="10" fill="#fff" stroke="#333" stroke-width="1"/>
<rect x="857" y="649" width="7.4" height="6.4" fill="#777"/>
<path d="M857 651 H864.4 M857 653.2 H864.4 M859.4 649 V655.4 M861.8 649 V655.4" stroke="#ddd" stroke-width="0.5"/>
<path d="M899.4 641.6 V638.2 Q899.4 637.2 900.4 637.2 H909 Q910 637.2 910 638.2 V641.6 Z" fill="#fff" stroke="#333" stroke-width="1"/>
<path d="M896 650 V643.4 Q896 641.6 897.8 641.6 H911.6 Q913.4 641.6 913.4 643.4 V650 Z" fill="#c9aa72" stroke="#333" stroke-width="1.1"/>
<rect x="897.8" y="646" width="13.8" height="1.2" fill="#333"/>
<rect x="899.4" y="647" width="10.6" height="10" fill="#fff" stroke="#333" stroke-width="1"/>
<rect x="901" y="649" width="7.6" height="6.4" fill="#f02828"/>
<path d="M901.4 649 L908.2 655.4" stroke="#fff" stroke-width="1.6"/>
</g>
<!-- copy view icon -->
<g>
<rect x="842.6" y="665.6" width="5.8" height="7.2" fill="#9a9a9a" stroke="#555" stroke-width="0.8"/>
<path d="M844 671.6 V667.4 L846 669.6" fill="none" stroke="#222" stroke-width="0.8"/>
<path d="M849 669.4 Q851.4 669.6 851.2 672" fill="none" stroke="#10a030" stroke-width="1.1"/>
<rect x="848.8" y="672" width="4" height="3.8" fill="#eee" stroke="#333" stroke-width="0.9"/>
</g>
<!-- scroll arrows in text panel -->
<g fill="none" stroke="#a8a8a8" stroke-width="1.3">
<path d="M826.2 78 L828.6 75.4 L831 78"/>
<path d="M826.2 524 L828.6 526.6 L831 524"/>
</g>
<!-- resize grip -->
<g fill="#b8b8b8">
<rect x="926" y="690" width="1.2" height="1.2"/><rect x="926" y="693" width="1.2" height="1.2"/><rect x="926" y="696" width="1.2" height="1.2"/>
<rect x="923" y="693" width="1.2" height="1.2"/><rect x="923" y="696" width="1.2" height="1.2"/><rect x="920" y="696" width="1.2" height="1.2"/>
</g>
</svg>

<span class="t" style="left:20.0px;top:6.8px;font-size:8.7px;line-height:8.7px;color:#8a8a8a;transform:scaleX(0.8451);">GEO5 2016 - Pile [X:\WEB-SCREENS\</span>
<span class="t" style="left:147.5px;top:6.8px;font-size:8.7px;line-height:8.7px;color:#8a8a8a;transform:scaleX(0.7893);">_______</span>
<span class="t" style="left:174.4px;top:6.8px;font-size:8.7px;line-height:8.7px;color:#8a8a8a;transform:scaleX(0.8841);">DONE</span>
<span class="t" style="left:196.8px;top:6.8px;font-size:8.7px;line-height:8.7px;color:#8a8a8a;transform:scaleX(0.7976);">___________</span>
<span class="t" style="left:239.4px;top:6.8px;font-size:8.7px;line-height:8.7px;color:#8a8a8a;transform:scaleX(0.9367);">\Pile\screen-02.gpi *]</span>
<span class="t" style="left:6.0px;top:24.1px;font-size:8.2px;line-height:8.2px;color:#484848;transform:scaleX(0.8104);">File</span>
<span class="t" style="left:26.7px;top:24.1px;font-size:8.2px;line-height:8.2px;color:#484848;transform:scaleX(0.9426);">Edit</span>
<span class="t" style="left:49.3px;top:24.1px;font-size:8.2px;line-height:8.2px;color:#484848;transform:scaleX(1.0429);">Input</span>
<span class="t" style="left:77.7px;top:24.1px;font-size:8.2px;line-height:8.2px;color:#484848;transform:scaleX(0.9508);">Analysis</span>
<span class="t" style="left:115.7px;top:24.1px;font-size:8.2px;line-height:8.2px;color:#484848;transform:scaleX(1.0214);">Outputs</span>
<span class="t" style="left:154.3px;top:24.1px;font-size:8.2px;line-height:8.2px;color:#484848;transform:scaleX(0.9461);">Settings</span>
<span class="t" style="left:192.0px;top:24.1px;font-size:8.2px;line-height:8.2px;color:#484848;transform:scaleX(0.9915);">Help</span>
<span class="t" style="left:229.0px;top:47.5px;font-size:8.2px;line-height:8.2px;color:#1a1a2a;transform:scaleX(0.9221);">[1]</span>
<span class="t" style="left:573.2px;top:73.9px;font-size:7.4px;line-height:7.4px;color:#111;font-weight:bold;transform:scaleX(1.0678);">Verification of pile vertical bearing capacity according to LS</span>
<span class="t" style="left:573.2px;top:83.2px;font-size:7.4px;line-height:7.4px;color:#141414;transform:scaleX(0.9904);">Analysis carried out with automatic selection of the most unfavourable load</span>
<span class="t" style="left:573.2px;top:91.7px;font-size:7.4px;line-height:7.4px;color:#141414;transform:scaleX(0.9731);">cases.</span>
<span class="t" style="left:573.2px;top:109.3px;font-size:7.4px;line-height:7.4px;color:#141414;transform:scaleX(0.9815);">Verification of compressive pile:</span>
<span class="t" style="left:573.2px;top:118.1px;font-size:7.4px;line-height:7.4px;color:#141414;transform:scaleX(0.9821);">Most severe load case No. 1. (Zatížení č. 1)</span>
<span class="t" style="left:573.2px;top:134.9px;font-size:7.4px;line-height:7.4px;color:#141414;transform:scaleX(0.9568);">Pile skin bearing capacity</span>
<span class="t" style="left:659.4px;top:134.9px;font-size:7.4px;line-height:7.4px;color:#141414;transform:scaleX(0.9731);">R</span>
<span class="t" style="left:665.0px;top:138.0px;font-size:6.2px;line-height:6.2px;color:#141414;transform:scaleX(0.9697);">s</span>
<span class="t" style="left:671.9px;top:134.9px;font-size:7.4px;line-height:7.4px;color:#141414;transform:scaleX(0.9473);">=</span>
<span class="t" style="left:684.6px;top:134.9px;font-size:7.4px;line-height:7.4px;color:#141414;transform:scaleX(0.9999);">742,04 kN</span>
<span class="t" style="left:573.2px;top:144.8px;font-size:7.4px;line-height:7.4px;color:#141414;transform:scaleX(0.9585);">Pile base bearing capacity</span>
<span class="t" style="left:659.4px;top:144.8px;font-size:7.4px;line-height:7.4px;color:#141414;transform:scaleX(0.9731);">R</span>
<span class="t" style="left:665.0px;top:147.9px;font-size:6.2px;line-height:6.2px;color:#141414;transform:scaleX(1.0136);">b</span>
<span class="t" style="left:671.9px;top:144.8px;font-size:7.4px;line-height:7.4px;color:#141414;transform:scaleX(0.9473);">=</span>
<span class="t" style="left:681.0px;top:144.8px;font-size:7.4px;line-height:7.4px;color:#141414;transform:scaleX(0.9864);">1313,58 kN</span>
<span class="t" style="left:573.2px;top:163.9px;font-size:7.4px;line-height:7.4px;color:#141414;transform:scaleX(0.9648);">Pile bearing capacity</span>
<span class="t" style="left:659.4px;top:163.9px;font-size:7.4px;line-height:7.4px;color:#141414;transform:scaleX(0.9731);">R</span>
<span class="t" style="left:665.0px;top:167.0px;font-size:6.2px;line-height:6.2px;color:#141414;transform:scaleX(0.9697);">c</span>
<span class="t" style="left:671.9px;top:163.9px;font-size:7.4px;line-height:7.4px;color:#141414;transform:scaleX(0.9473);">=</span>
<span class="t" style="left:681.0px;top:163.9px;font-size:7.4px;line-height:7.4px;color:#141414;transform:scaleX(0.9864);">2055,62 kN</span>
<span class="t" style="left:573.2px;top:174.1px;font-size:7.4px;line-height:7.4px;color:#141414;transform:scaleX(0.9879);">Ultimate vertical force</span>
<span class="t" style="left:659.4px;top:174.1px;font-size:7.4px;line-height:7.4px;color:#141414;transform:scaleX(1.0532);">V</span>
<span class="t" style="left:665.0px;top:177.2px;font-size:6.2px;line-height:6.2px;color:#141414;transform:scaleX(1.0136);">d</span>
<span class="t" style="left:671.9px;top:174.1px;font-size:7.4px;line-height:7.4px;color:#141414;transform:scaleX(0.9473);">=</span>
<span class="t" style="left:684.6px;top:174.1px;font-size:7.4px;line-height:7.4px;color:#141414;transform:scaleX(0.9999);">600,00 kN</span>
<span class="t" style="left:573.2px;top:194.7px;font-size:7.4px;line-height:7.4px;color:#141414;transform:scaleX(1.0493);">Safety factor = 3,43 &gt; 1,50</span>
<span class="t" style="left:573.2px;top:212.4px;font-size:7.4px;line-height:7.4px;color:#2aa52a;transform:scaleX(0.9444);">Pile bearing capacity is SATISFACTORY</span>
<span class="t" style="left:838.6px;top:75.3px;font-size:7.4px;line-height:7.4px;color:#141414;transform:scaleX(0.9257);">Frames</span>
<span class="t" style="left:854.6px;top:92.3px;font-size:7.4px;line-height:7.4px;color:#141414;transform:scaleX(0.9863);">Project</span>
<span class="t" style="left:854.6px;top:107.2px;font-size:7.4px;line-height:7.4px;color:#141414;transform:scaleX(0.9694);">Settings</span>
<span class="t" style="left:854.6px;top:126.3px;font-size:7.4px;line-height:7.4px;color:#141414;transform:scaleX(0.9545);">Profile</span>
<span class="t" style="left:854.6px;top:141.1px;font-size:7.4px;line-height:7.4px;color:#141414;transform:scaleX(0.9249);">Modulus Kh</span>
<span class="t" style="left:854.6px;top:155.7px;font-size:7.4px;line-height:7.4px;color:#141414;transform:scaleX(0.8608);">Soils</span>
<span class="t" style="left:854.6px;top:170.3px;font-size:7.4px;line-height:7.4px;color:#141414;transform:scaleX(0.9194);">Assign</span>
<span class="t" style="left:854.6px;top:189.7px;font-size:7.4px;line-height:7.4px;color:#141414;transform:scaleX(0.9360);">Load</span>
<span class="t" style="left:854.6px;top:204.7px;font-size:7.4px;line-height:7.4px;color:#141414;transform:scaleX(0.9645);">Geometry</span>
<span class="t" style="left:854.6px;top:219.6px;font-size:7.4px;line-height:7.4px;color:#141414;transform:scaleX(0.9659);">Material</span>
<span class="t" style="left:854.6px;top:234.3px;font-size:7.4px;line-height:7.4px;color:#141414;transform:scaleX(0.9496);">GWT + subsoil</span>
<span class="t" style="left:854.6px;top:249.1px;font-size:7.4px;line-height:7.4px;color:#141414;transform:scaleX(0.9841);">Stage settings</span>
<span class="t" style="left:854.6px;top:268.7px;font-size:7.4px;line-height:7.4px;color:#141414;transform:scaleX(0.9686);">Vertical cap.</span>
<span class="t" style="left:854.6px;top:283.2px;font-size:7.4px;line-height:7.4px;color:#141414;transform:scaleX(0.9818);">Settlement</span>
<span class="t" style="left:854.6px;top:298.2px;font-size:7.4px;line-height:7.4px;color:#141414;transform:scaleX(0.9676);">Horizontal cap.</span>
<span class="t" style="left:838.5px;top:552.9px;font-size:7.4px;line-height:7.4px;color:#141414;transform:scaleX(0.9926);">Outputs</span>
<span class="t" style="left:855.0px;top:569.9px;font-size:7.4px;line-height:7.4px;color:#141414;transform:scaleX(0.9628);">Add picture</span>
<span class="t" style="left:839.2px;top:585.0px;font-size:7.4px;line-height:7.4px;color:#141414;transform:scaleX(0.9961);">Vertical cap. :</span>
<span class="t" style="left:920.5px;top:585.0px;font-size:7.4px;line-height:7.4px;color:#141414;transform:scaleX(0.8970);">0</span>
<span class="t" style="left:839.2px;top:598.3px;font-size:7.4px;line-height:7.4px;color:#141414;transform:scaleX(1.0498);">Total :</span>
<span class="t" style="left:920.5px;top:598.3px;font-size:7.4px;line-height:7.4px;color:#141414;transform:scaleX(0.8970);">0</span>
<span class="t" style="left:855.0px;top:613.3px;font-size:7.4px;line-height:7.4px;color:#141414;transform:scaleX(0.9736);">List of pictures</span>
<span class="t" style="left:855.0px;top:667.0px;font-size:7.4px;line-height:7.4px;color:#141414;transform:scaleX(0.9621);">Copy view</span>
<span class="t" style="left:23.2px;top:549.0px;font-size:7.4px;line-height:7.4px;color:#111;font-weight:bold;transform:scaleX(0.9965);">Analysis :</span>
<span class="t" style="left:118.2px;top:548.9px;font-size:8.2px;line-height:8.2px;color:#1a1a2a;transform:scaleX(0.9441);">[1]</span>
<span class="t" style="left:785.3px;top:547.8px;font-size:7.4px;line-height:7.4px;color:#141414;transform:scaleX(0.9772);">In detail</span>
<span class="t" style="left:23.7px;top:569.2px;font-size:7.4px;line-height:7.4px;color:#141414;transform:scaleX(0.9855);">Bearing capacity according to the theory of LS</span>
<span class="t" style="left:23.7px;top:585.5px;font-size:7.4px;line-height:7.4px;color:#141414;transform:scaleX(0.9588);">Select maxima automatically</span>
<span class="t" style="left:26.9px;top:599.3px;font-size:7.4px;line-height:7.4px;color:#141414;transform:scaleX(0.9862);">Bearing capacity according to the theory of LS</span>
<span class="t" style="left:25.2px;top:613.9px;font-size:7.4px;line-height:7.4px;color:#141414;transform:scaleX(0.9825);">Coeff. of technological influence - selected values due to Sedlecky</span>
<span class="t" style="left:28.0px;top:627.0px;font-size:7.4px;line-height:7.4px;color:#141414;transform:scaleX(0.9763);">concreting without casing using so-called separate casting</span>
<span class="t" style="left:439.7px;top:627.2px;font-size:8px;line-height:8px;color:#a2a2a2;transform:scaleX(0.9719);">k =</span>
<span class="t" style="left:469.7px;top:627.2px;font-size:8px;line-height:8px;color:#9a9a9a;transform:scaleX(0.8666);">1,00</span>
<span class="t" style="left:492.0px;top:627.2px;font-size:8px;line-height:8px;color:#a8a8a8;transform:scaleX(0.8982);">[–]</span>
<span class="t" style="left:48.9px;top:145.2px;font-size:8.8px;line-height:8.8px;color:#555;transform:scaleX(0.8183);">OG</span>
<span class="t" style="left:63.0px;top:205.2px;font-size:8.8px;line-height:8.8px;color:#555;transform:scaleX(0.8184);">FG</span>
<span class="t" style="left:239.8px;top:176.2px;font-size:8.8px;line-height:8.8px;color:#7a9a7a;transform:scaleX(0.9985);">2,00</span>
<span class="t" style="left:264.5px;top:190.0px;font-size:8.8px;line-height:8.8px;color:#7a9a7a;transform:scaleX(0.9985);">1,00</span>
<span class="t" style="left:291.9px;top:163.2px;font-size:8.8px;line-height:8.8px;color:#7a9a7a;transform:scaleX(0.9518);">1,00</span>
<span class="t" style="left:319.0px;top:310.4px;font-size:8.8px;line-height:8.8px;color:#7a9a7a;transform:scaleX(0.9810);">9,00</span>
<span class="t" style="left:517.3px;top:241.2px;font-size:9px;line-height:9px;color:#1f8a1f;font-weight:bold;transform:scaleX(1.0552);">1(1)</span>
<span class="t" style="left:517.3px;top:360.7px;font-size:9px;line-height:9px;color:#1f8a1f;font-weight:bold;transform:scaleX(1.0552);">2(2)</span>
<span class="t" style="left:11.8px;top:83.2px;font-size:9.2px;line-height:9.2px;color:#111;font-weight:bold;transform:scaleX(1.0383);">2D</span>
<span class="t" style="left:10.2px;top:112.7px;font-size:8.6px;line-height:8.6px;color:#9c9ca4;transform:scaleX(0.8545);">3D</span>
<span class="t v" style="left:5.3px;top:65.2px;font-size:7.2px;line-height:7.2px;color:#1a1a1a;transform:rotate(-90deg) scaleX(0.8884);">File</span>
<span class="t v" style="left:121.9px;top:65.2px;font-size:7.2px;line-height:7.2px;color:#1a1a1a;transform:rotate(-90deg) scaleX(0.9765);">Edit</span>
<span class="t v" style="left:192.9px;top:65.2px;font-size:7.2px;line-height:7.2px;color:#1a1a1a;transform:rotate(-90deg) scaleX(0.9895);">Stage</span>
<span class="t v" style="left:6.5px;top:678.4px;font-size:7.2px;line-height:7.2px;color:#1a1a1a;transform:rotate(-90deg) scaleX(0.9858);">Vertical cap.</span>
</body>
</html>
